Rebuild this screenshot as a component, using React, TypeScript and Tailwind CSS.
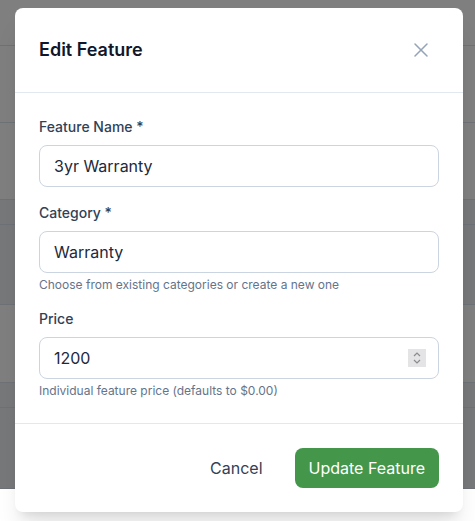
import { X } from 'lucide-react';

const rows = [
    { h: 'h-[46px]', tone: 'bg-[#7f7f7f]' },
    { h: 'h-[77px]', tone: 'bg-[#7f7f7f]' },
    { h: 'h-[77px]', tone: 'bg-[#7f7f7f]' },
    { h: 'h-[25px]', tone: 'bg-[#77787a]' },
    { h: 'h-[80px]', tone: 'bg-[#77787a]' },
    { h: 'h-[78px]', tone: 'bg-[#7f7f7f]' },
    { h: 'h-[25px]', tone: 'bg-[#77787a]' },
    { h: 'h-[81px]', tone: 'bg-[#77787a]' },
];

function Field({ label, value, help }: { label: string; value: string; help?: string }) {
    return (
        <div className="flex flex-col">
            <label className="text-sm font-medium leading-5 text-[#334155] mb-2">{label}</label>
            <input
                type="text"
                defaultValue={value}
                className="h-[42px] w-full rounded-lg border border-[#cbd5e1] bg-white px-3.5 text-base text-[#1e293b] outline-none"
            />
            {help && <p className="mt-1 text-xs leading-4 text-[#64748b]">{help}</p>}
        </div>
    );
}

export default function App() {
    return (
        <div className="relative h-[521px] w-[475px] overflow-hidden font-['Inter',sans-serif]">
            <div className="flex flex-col">
                {rows.map((r, i) => (
                    <div key={i} className={`${r.h} ${r.tone} border-b border-[#6e7175]`} />
                ))}
            </div>

            <div className="absolute left-[15px] top-[8px] w-[448px] rounded-lg bg-white shadow-xl">
                <div className="flex items-center justify-between border-b border-[#e2e8f0] px-6 py-7">
                    <h2 className="text-lg font-semibold leading-7 text-[#0f172a]">Edit Feature</h2>
                    <button className="text-[#94a3b8] mr-1.5">
                        <X size={24} strokeWidth={1.5} />
                    </button>
                </div>

                <div className="flex flex-col gap-4 px-6 py-6">
                    <Field label="Feature Name *" value="3yr Warranty" />
                    <Field label="Category *" value="Warranty" help="Choose from existing categories or create a new one" />

                    <div className="flex flex-col">
                        <label className="text-sm font-medium leading-5 text-[#334155] mb-2">Price</label>
                        <div className="flex h-[42px] w-full items-center rounded-lg border border-[#cbd5e1] bg-white pl-3.5 pr-3">
                            <input
                                type="text"
                                defaultValue="1200"
                                className="min-w-0 flex-1 bg-transparent text-base text-[#1e293b] outline-none"
                            />
                            <div className="flex h-[18px] w-[18px] flex-col items-center justify-center bg-[#e4e4e7] text-[#8a8a8f]">
                                <svg width="10" height="14" viewBox="0 0 10 14" fill="none" stroke="currentColor" strokeWidth="1.2">
                                    <path d="M2 5 L5 2 L8 5" />
                                    <path d="M2 9 L5 12 L8 9" />
                                </svg>
                            </div>
                        </div>
                        <p className="mt-1 text-xs leading-4 text-[#64748b]">Individual feature price (defaults to $0.00)</p>
                    </div>
                </div>

                <div className="flex items-center justify-end gap-4 border-t border-[#e2e8f0] px-6 py-6">
                    <button className="h-10 px-4 text-base text-[#334155]">Cancel</button>
                    <button className="h-10 rounded-lg bg-[#43964a] px-3.5 text-base text-white">Update Feature</button>
                </div>
            </div>
        </div>
    );
}
